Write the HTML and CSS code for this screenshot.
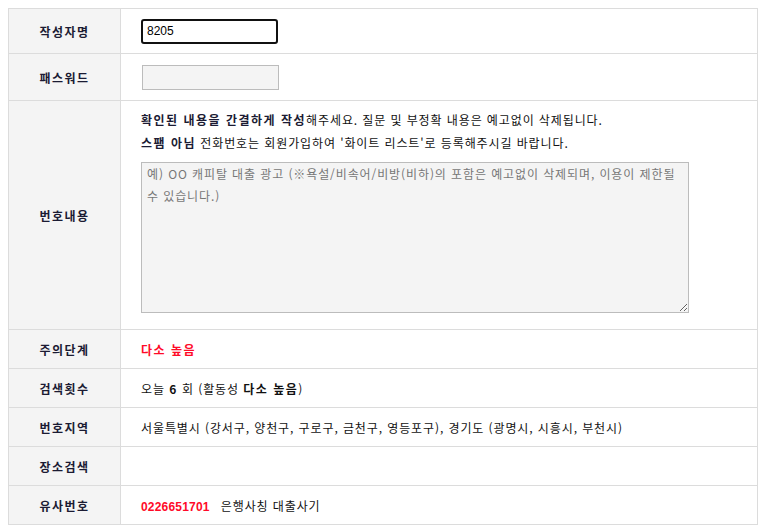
FILE: index.html
```html
<!DOCTYPE html>
<html lang="ko">
<head>
<meta charset="utf-8">
<title>번호 등록</title>
<link rel="stylesheet" href="styles.css">
</head>
<body>
<table class="form">
  <tr class="r-name">
    <th>작성자명</th>
    <td><input class="inp inp-focus" type="text" value="8205"></td>
  </tr>
  <tr class="r-pass">
    <th>패스워드</th>
    <td><input class="inp inp-gray" type="password"></td>
  </tr>
  <tr class="r-body">
    <th>번호내용</th>
    <td class="body-cell">
      <p class="note"><b>확인된 내용을 간결하게 작성</b>해주세요. 질문 및 부정확 내용은 예고없이 삭제됩니다.</p>
      <p class="note"><b>스팸 아님</b> 전화번호는 회원가입하여 '화이트 리스트'로 등록해주시길 바랍니다.</p>
      <textarea class="ta" placeholder="예) OO 캐피탈 대출 광고 (※욕설/비속어/비방(비하)의 포함은 예고없이 삭제되며, 이용이 제한될 수 있습니다.)"></textarea>
    </td>
  </tr>
  <tr class="r-std">
    <th>주의단계</th>
    <td><b class="red">다소 높음</b></td>
  </tr>
  <tr class="r-std">
    <th>검색횟수</th>
    <td>오늘 <b>6</b> 회 (활동성 <b>다소 높음</b>)</td>
  </tr>
  <tr class="r-std">
    <th>번호지역</th>
    <td>서울특별시 (강서구, 양천구, 구로구, 금천구, 영등포구), 경기도 (광명시, 시흥시, 부천시)</td>
  </tr>
  <tr class="r-std">
    <th>장소검색</th>
    <td></td>
  </tr>
  <tr class="r-std">
    <th>유사번호</th>
    <td><b class="red num">0226651701</b><span class="desc">은행사칭 대출사기</span></td>
  </tr>
</table>
</body>
</html>
```

FILE: styles.css
```css
html, body {
  margin: 0;
  padding: 0;
  background: #fff;
}
body {
  padding: 8px;
  font-family: "Noto Sans CJK KR", "Noto Sans", sans-serif;
  font-size: 12px;
  color: #111;
}
.form {
  border-collapse: collapse;
  width: 750px;
  table-layout: fixed;
}
.form th, .form td {
  border: 1px solid #dcdcdc;
  padding: 0;
  vertical-align: middle;
}
.form th {
  width: 111px;
  background: #f4f4f4;
  font-weight: bold;
  color: #1b1b33;
  text-align: center;
  font-size: 12px;
  letter-spacing: 1.5px;
}
.form td {
  padding-left: 20px;
  text-align: left;
  letter-spacing: 0.9px;
}
.form td b {
  letter-spacing: 1.5px;
}
.r-name th, .r-name td { height: 44px; }
.r-pass th, .r-pass td { height: 46px; }
.r-body th { height: 228px; }
.r-std th, .r-std td { height: 38px; }
.inp {
  display: block;
  box-sizing: border-box;
  width: 137px;
  height: 25px;
  margin: 0;
  font-family: "Liberation Sans", Arial, sans-serif;
  font-size: 12px;
  padding: 0 4px;
  color: #000;
  letter-spacing: 0;
}
.inp-focus {
  border: 2px solid #111;
  border-radius: 3px;
  background: #fff;
  outline: none;
}
.inp-gray {
  border: 1px solid #bcbcbc;
  background: #f4f4f4;
  margin-left: 1px;
}
.form td.body-cell {
  vertical-align: top;
  height: 221px;
  padding-top: 7px;
  padding-bottom: 0;
}
.note {
  margin: 0;
  line-height: 23px;
  color: #111;
}
.note b {
  color: #1b1b33;
}
.ta {
  display: block;
  box-sizing: border-box;
  width: 548px;
  height: 151px;
  margin: 8px 0 0 0;
  border: 1px solid #bcbcbc;
  background: #f4f4f4;
  font-family: "Noto Sans CJK KR", "Noto Sans", sans-serif;
  font-size: 12px;
  line-height: 22px;
  letter-spacing: 0.9px;
  padding: 0 4px 0 5px;
  resize: both;
}
.ta::placeholder {
  color: #777;
}
.form td b.red {
  color: #ff0a28;
}
.form td b.num {
  font-family: "Liberation Sans", Arial, sans-serif;
  letter-spacing: 0.2px;
}
.desc {
  margin-left: 11px;
}
```
